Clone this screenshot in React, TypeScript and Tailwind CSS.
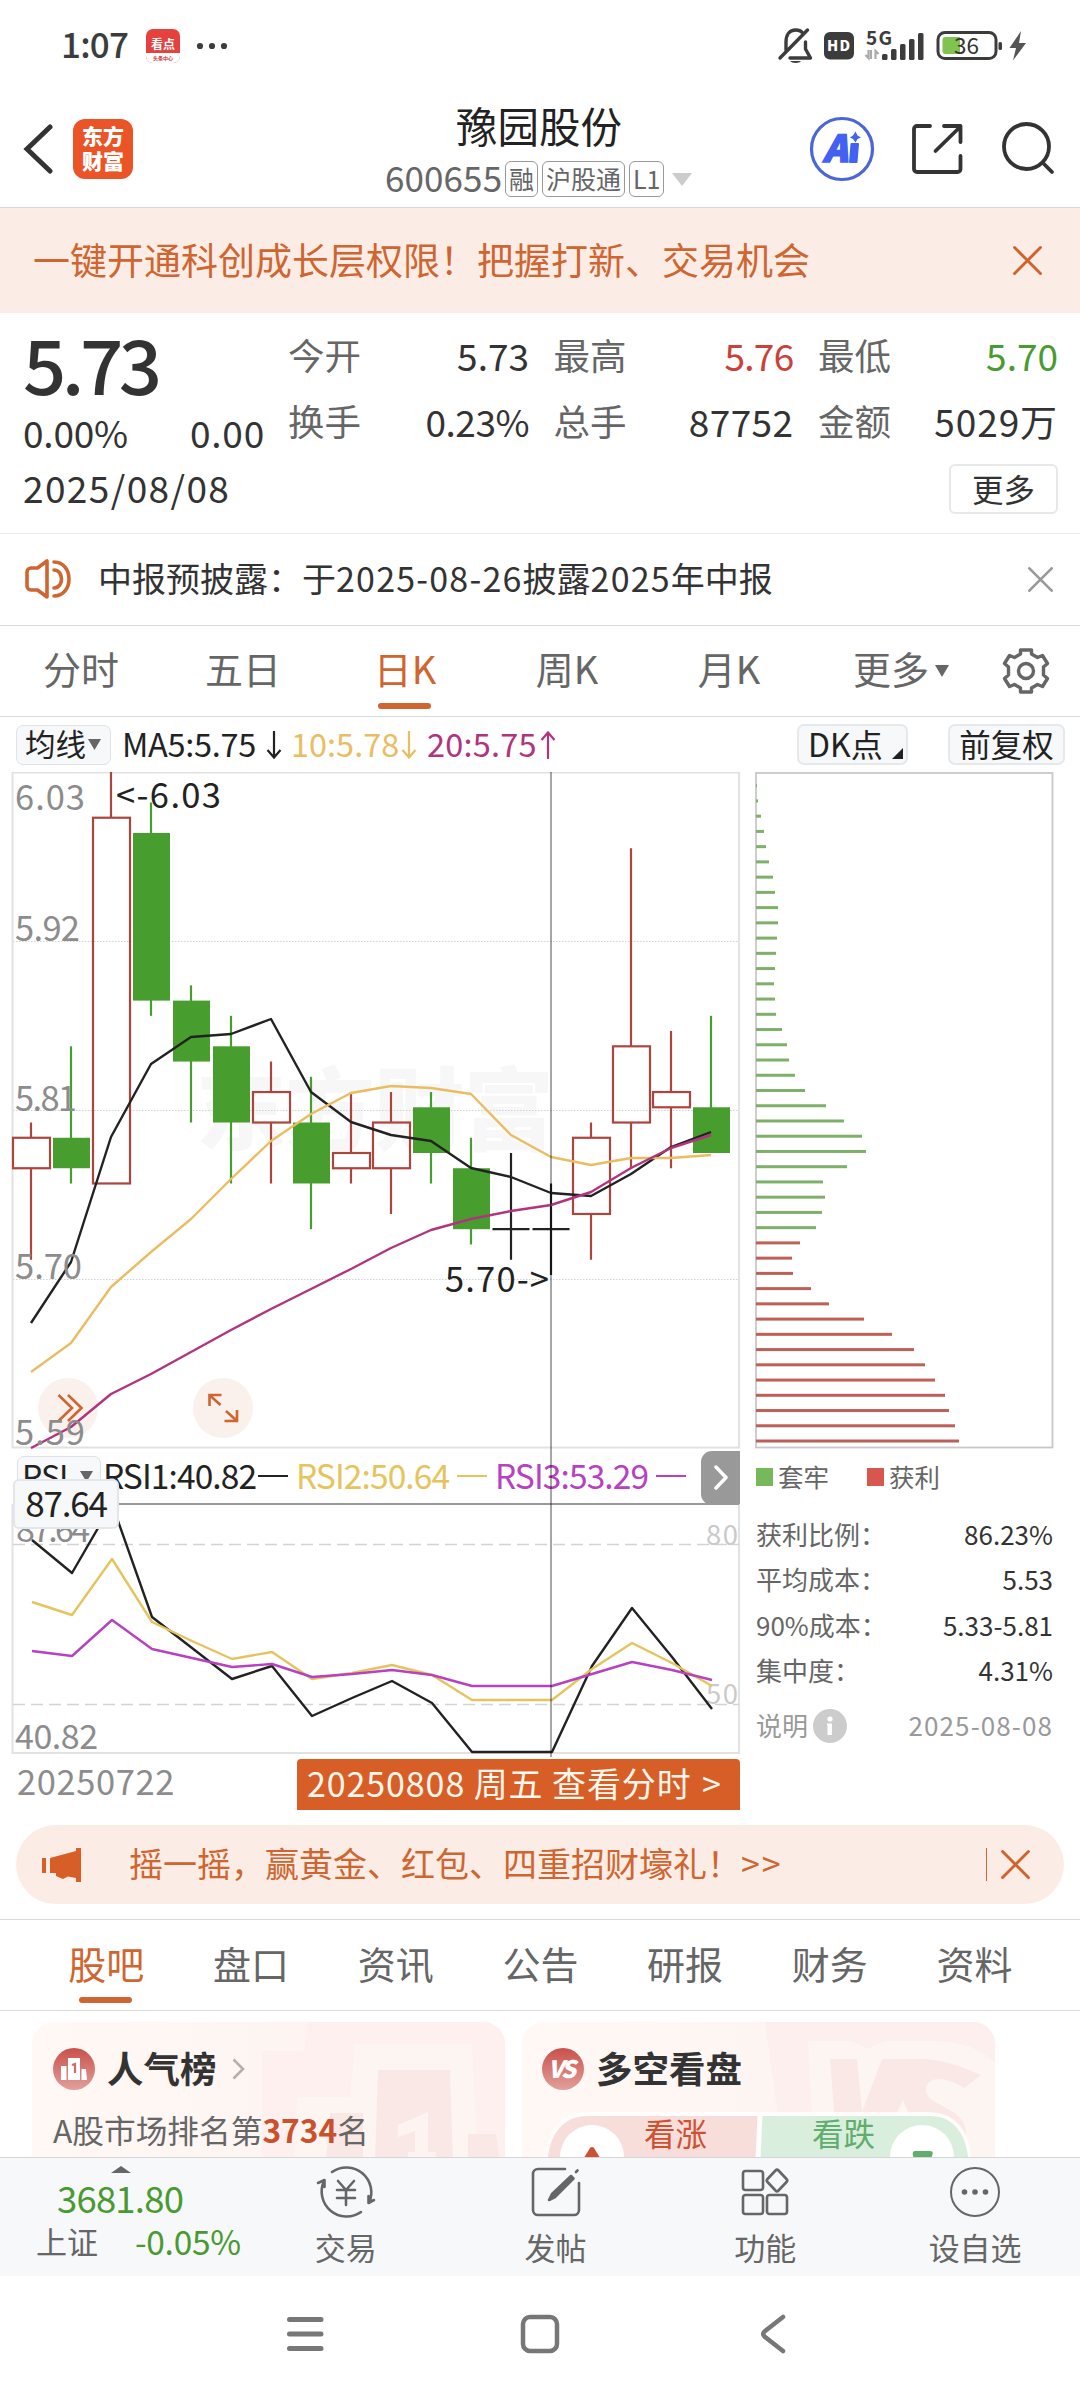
import type { ReactNode } from 'react'

type Candle = { open: number; close: number; high: number; low: number }

const candles: Candle[] = [
  { open: 5.77, close: 5.79, high: 5.8, low: 5.71 },
  { open: 5.79, close: 5.77, high: 5.85, low: 5.76 },
  { open: 5.76, close: 6.0, high: 6.03, low: 5.76 },
  { open: 5.99, close: 5.88, high: 6.01, low: 5.87 },
  { open: 5.88, close: 5.84, high: 5.89, low: 5.8 },
  { open: 5.85, close: 5.8, high: 5.87, low: 5.76 },
  { open: 5.8, close: 5.82, high: 5.84, low: 5.76 },
  { open: 5.8, close: 5.76, high: 5.83, low: 5.73 },
  { open: 5.77, close: 5.78, high: 5.82, low: 5.76 },
  { open: 5.77, close: 5.8, high: 5.82, low: 5.74 },
  { open: 5.81, close: 5.78, high: 5.82, low: 5.76 },
  { open: 5.77, close: 5.73, high: 5.79, low: 5.72 },
  { open: 5.73, close: 5.73, high: 5.78, low: 5.71 },
  { open: 5.73, close: 5.73, high: 5.76, low: 5.7 },
  { open: 5.74, close: 5.79, high: 5.8, low: 5.71 },
  { open: 5.8, close: 5.85, high: 5.98, low: 5.77 },
  { open: 5.81, close: 5.82, high: 5.86, low: 5.77 },
  { open: 5.81, close: 5.78, high: 5.87, low: 5.78 },
]

// y positions of the indicator lines, one per trading day
const ma5 = [1323, 1262, 1137, 1064, 1037, 1034, 1019, 1092, 1122, 1135, 1141, 1168, 1177, 1193, 1196, 1174, 1147, 1132]
const ma10 = [1372, 1343, 1287, 1252, 1219, 1179, 1141, 1114, 1093, 1086, 1088, 1094, 1135, 1157, 1165, 1158, 1158, 1155]
const ma20 = [1448, 1427, 1394, 1374, 1352, 1330, 1309, 1289, 1269, 1248, 1230, 1219, 1211, 1205, 1192, 1168, 1148, 1135]
const rsi1 = [1540, 1573, 1504, 1617, 1648, 1679, 1666, 1716, 1698, 1681, 1703, 1752, 1752, 1752, 1666, 1608, 1657, 1709]
const rsi2 = [1602, 1615, 1559, 1622, 1641, 1659, 1652, 1679, 1673, 1665, 1675, 1700, 1700, 1700, 1669, 1643, 1663, 1686]
const rsi3 = [1651, 1656, 1620, 1649, 1658, 1667, 1664, 1677, 1674, 1670, 1675, 1686, 1686, 1686, 1674, 1662, 1670, 1680]

const trapped = [1, 2, 5, 8, 10, 13, 17, 19, 22, 22, 21, 20, 19, 18, 19, 20, 26, 31, 33, 39, 49, 70, 88, 106, 110, 91, 67, 69, 66, 60]
const profit = [44, 36, 37, 55, 73, 108, 136, 158, 169, 179, 189, 193, 199, 203]

const dayX = (i: number) => 31 + i * 40
const priceY = (p: number) => 772 + (6.03 - p) * 1524
const toPoints = (ys: number[]) => ys.map((y, i) => `${dayX(i)},${y}`).join(' ')

const quotes = [
  { label: '今开', value: '5.73', color: 'text-[#333]' },
  { label: '最高', value: '5.76', color: 'text-[#c9413a] tracking-[-0.7px]' },
  { label: '最低', value: '5.70', color: 'text-[#4a9a32]' },
  { label: '换手', value: '0.23%', color: 'text-[#333] tracking-[-0.5px]' },
  { label: '总手', value: '87752', color: 'text-[#333] tracking-[0.4px]' },
  { label: '金额', value: '5029万', color: 'text-[#333] tracking-[0.9px]' },
]

const periods = ['分时', '五日', '日K', '周K', '月K']
const sections = ['股吧', '盘口', '资讯', '公告', '研报', '财务', '资料']

const stats = [
  { label: '获利比例：', value: '86.23%' },
  { label: '平均成本：', value: '5.53' },
  { label: '90%成本：', value: '5.33-5.81' },
  { label: '集中度：', value: '4.31%' },
]

function Cross({ size, color, width = 3 }: { size: number; color: string; width?: number }) {
  return (
    <svg width={size} height={size} viewBox="0 0 28 28" fill="none" stroke={color} strokeWidth={width} strokeLinecap="round">
      <path d="M1.5 1.5 26.5 26.5M26.5 1.5 1.5 26.5" />
    </svg>
  )
}

function StatusBar() {
  return (
    <div className="flex h-[92px] items-center pl-[61px] text-[#3c3c3c]">
      <span className="w-[85px] text-[35px] leading-[40px] font-medium tracking-[-0.8px] -mt-[6px]">1:07</span>
      <div className="flex h-[34px] w-[34px] flex-col items-center rounded-[7px] bg-[#e5423f]">
        <span className="mt-[6px] text-[12px] leading-[18px] font-bold text-white">看点</span>
        <span className="h-[10px] w-full rounded-b-[7px] bg-white text-center text-[5px] leading-[9px] font-bold text-[#c33]">头条中心</span>
      </div>
      <svg className="ml-[16px]" width="32" height="8" fill="#3c3c3c">
        <circle cx="4" cy="4" r="3.1" />
        <circle cx="16" cy="4" r="3.1" />
        <circle cx="28" cy="4" r="3.1" />
      </svg>
      <svg className="ml-auto mr-[52px]" width="252" height="44" viewBox="776 24 252 44">
        {/* muted bell */}
        <g fill="none" stroke="#3c3c3c" strokeWidth="3.4" strokeLinecap="round" strokeLinejoin="round">
          <path d="M786 50V42C786 34 790 30 795.500 30C799 30 801.500 31 803 33.500M805.500 42V49L810.500 58H790" />
          <path d="M780 58 807.500 30" />
        </g>
        <path d="M790 61h11c-1.500 2.500-9 2.500-11 0z" fill="#3c3c3c" />
        <rect x="824" y="32" width="30" height="27.500" rx="6" fill="#3c3c3c" />
        <text x="827" y="51" fontSize="14.500" fontWeight="900" fill="#fff" textLength="23">HD</text>
        <text x="866" y="44.500" fontSize="19" fontWeight="700" fill="#3c3c3c" textLength="26">5G</text>
        <path d="M868.500 50v8l-3-3M875.500 59v-8l3 3M871 50v9" stroke="#aaa" strokeWidth="2.200" fill="none" />
        <g fill="#3c3c3c">
          <rect x="882" y="54" width="5.500" height="6" rx="1.500" />
          <rect x="891" y="49" width="5.500" height="11" rx="1.500" />
          <rect x="900" y="44" width="5.500" height="16" rx="1.500" />
          <rect x="909" y="39" width="5.500" height="21" rx="1.500" />
          <rect x="918" y="33" width="5.500" height="27" rx="1.500" />
        </g>
        <rect x="938" y="32.500" width="58" height="26" rx="7" fill="none" stroke="#3c3c3c" strokeWidth="3" />
        <path d="M942.500 40a3 3 0 0 1 3-3H960v17h-14.500a3 3 0 0 1-3-3z" fill="#80c34f" />
        <text x="954" y="54" fontSize="22.500" fill="#333" textLength="25">36</text>
        <rect x="998.500" y="42" width="3.500" height="8" rx="1.500" fill="#3c3c3c" />
        <path d="M1021 31 1009.500 48H1016L1013 60.500 1026 43H1019z" fill="#555" />
      </svg>
    </div>
  )
}

function Tag({ children }: { children: ReactNode }) {
  return (
    <span className="flex h-[36px] shrink-0 items-center rounded-[6px] border border-[#999] px-[3px] text-[25px] leading-[34px] whitespace-nowrap text-[#666]">
      <span className="-mt-[2px]">{children}</span>
    </span>
  )
}

function Header() {
  return (
    <header className="flex h-[116px] items-start border-b border-[#d6d8da]">
      <svg className="mt-[32px] ml-[22px]" width="32" height="50" fill="none" stroke="#333" strokeWidth="5">
        <path d="M28 3 5 25 28 47" strokeLinecap="round" />
      </svg>
      <div className="mt-[27px] ml-[19px] flex h-[60px] w-[60px] flex-col items-center justify-center rounded-[12px] bg-[#ea5426] pb-[3px] text-[21px] leading-[25px] font-black text-white">
        <span>东方</span>
        <span>财富</span>
      </div>
      <div className="ml-[252px] flex w-[308px] shrink-0 flex-col items-center">
        <h1 className="mt-[12px] text-[41.5px] leading-[42px] text-[#222]">豫园股份</h1>
        <div className="mt-[15px] flex w-full items-center gap-[4px]">
          <span className="-mt-[4px] w-[116px] shrink-0 text-[35px] leading-[36px] tracking-[0.1px] text-[#666]">600655</span>
          <Tag>融</Tag>
          <Tag>沪股通</Tag>
          <Tag>L1</Tag>
          <svg className="ml-[4px] shrink-0" width="20" height="13">
            <path d="M0 0H20L10 13z" fill="#ccc" />
          </svg>
        </div>
      </div>
      <svg className="mt-[18px] ml-[113px] shrink-0" width="250" height="80" viewBox="806 110 250 80" fill="none">
        <circle cx="842" cy="149" r="30.500" stroke="#4a66d8" strokeWidth="3.200" />
        <text x="823" y="162" fontSize="37" fontWeight="900" fontStyle="italic" fill="#4361f2" stroke="#4361f2" strokeWidth="1.500">A</text>
        <path d="M851.500 144h6.500l-1.500 18h-6.500z" fill="#4361f2" stroke="#4361f2" strokeWidth="2" strokeLinejoin="round" />
        <path d="M855.500 131.500 857.500 135.500 861 137.500 857.500 139 855.500 142.500 853 139 850 137.500 853 135.500z" fill="#4361f2" />
        <g stroke="#333" strokeWidth="3.800" strokeLinecap="round" strokeLinejoin="round">
          <path d="M930 126H917a3 3 0 0 0-3 3V169a3 3 0 0 0 3 3H957.500a3 3 0 0 0 3-3V156" />
          <path d="M944 126H960.500V142M960 127 935.500 151" />
          <circle cx="1026.500" cy="146.500" r="22.500" />
          <path d="M1043 163 1052 172" />
        </g>
      </svg>
    </header>
  )
}

function Quote() {
  return (
    <section className="flex h-[221px] border-b border-[#ececec] text-[#333]">
      <div className="w-[288px] shrink-0 pl-[23px]">
        <div className="mt-[11px] text-[76px] leading-[76px] font-medium tracking-[-4.5px]">5.73</div>
        <div className="mt-[12px] flex w-[242px] justify-between text-[37px] leading-[40px]">
          <span className="tracking-[-0.2px]">0.00%</span>
          <span className="tracking-[0.8px]">0.00</span>
        </div>
        <div className="mt-[15px] text-[37px] leading-[40px] tracking-[1.4px]">2025/08/08</div>
      </div>
      <div className="flex flex-1 flex-col items-end pr-[22px]">
        <div className="mt-[22px] grid w-full grid-cols-[241px_240px_240px] gap-x-[24.500px] gap-y-[26px]">
          {quotes.map((q) => (
            <div key={q.label} className="flex justify-between text-[37px] leading-[40px]">
              <span className="text-[36.500px] text-[#666]">{q.label}</span>
              <span className={q.color}>{q.value}</span>
            </div>
          ))}
        </div>
        <button className="mt-[23px] h-[50px] w-[109px] rounded-[6px] border-2 border-[#e8e8e8] text-[31.500px] leading-[40px] text-[#333]">
          <span className="block -mt-[3px]">更多</span>
        </button>
      </div>
    </section>
  )
}

function Notice() {
  return (
    <section className="flex h-[92px] items-center border-b border-[#d9d9d9] pl-[25px] text-[#333]">
      <svg className="-mt-[2px]" width="46" height="40" fill="none" stroke="#cf6530" strokeWidth="3.600" strokeLinecap="round" strokeLinejoin="round">
        <path d="M22 2V38L12.500 31H6a4 4 0 0 1-4-4V13a4 4 0 0 1 4-4H12.500z" />
        <path d="M29 11C39 11 39 29 29 29M29 3C49 3 49 37 29 37" />
      </svg>
      <span className="ml-[27px] -mt-[3px] text-[34px] leading-[40px]">
        中报预披露：于<span className="tracking-[1.2px]">2025-08-26</span>披露<span className="tracking-[1.2px]">2025</span>年中报
      </span>
      <span className="ml-auto mr-[27px]">
        <Cross size={25} color="#999" />
      </span>
    </section>
  )
}

function PeriodTabs() {
  return (
    <nav className="flex h-[91px] border-b border-[#d9d9d9] text-[38px] leading-[40px] text-[#666]">
      {periods.map((p) => (
        <div key={p} className={`relative w-[162px] pt-[22px] text-center ${p === '日K' ? 'text-[#cf6530]' : ''}`}>
          {p}
          {p === '日K' && <div className="absolute top-[77px] left-[54px] h-[6px] w-[53px] rounded-full bg-[#cf6530]" />}
        </div>
      ))}
      <div className="flex w-[165px] justify-end gap-[6px] pt-[22px] pr-[26px]">
        更多
        <svg className="mt-[17px]" width="14" height="12">
          <path d="M0 0H14L7 12z" fill="#666" />
        </svg>
      </div>
      <svg className="mt-[20px] ml-[26px]" width="50" height="50" viewBox="-25 -25 50 50" fill="none" stroke="#666" strokeWidth="3.400" strokeLinejoin="round">
        <path d="M-5.500-21H5.500V-17L11.500-13.500 16.500-15.500 21.500-7.500 17.500-4V4L21.500 7.500 16.500 15.500 11.500 13.500 5.500 17V21H-5.500V17L-11.500 13.500-16.500 15.500-21.500 7.500-17.500 4V-4L-21.500-7.500-16.500-15.500-11.500-13.500-5.500-17z" />
        <circle r="7.500" />
      </svg>
    </nav>
  )
}

function Arrow({ color, up }: { color: string; up?: boolean }) {
  return (
    <svg width="16" height="30" fill="none" stroke={color} strokeWidth="2.200" className={up ? 'shrink-0 rotate-180' : 'shrink-0'}>
      <path d="M8 1V27M1.500 20 8 27.500 14.500 20" />
    </svg>
  )
}

function ChartToolbar() {
  return (
    <div className="flex h-[55px] items-center pl-[16px] text-[#222]">
      <div className="flex h-[40px] w-[95px] items-center rounded-[7px] border border-[#dfe2e6] bg-[#f6f8fa] pl-[8px] text-[30.500px] leading-[36px]">
        <span className="-mt-[3px]">均线</span>
        <svg className="ml-[2px]" width="13" height="11">
          <path d="M0 0H13L6.500 11z" fill="#666" />
        </svg>
      </div>
      <span className="ml-[11px] -mt-[3px] w-[144px] shrink-0 text-[32.500px] leading-[36px] tracking-[-0.3px]">MA5:5.75</span>
      <Arrow color="#222" />
      <span className="ml-[9px] -mt-[3px] w-[110px] shrink-0 text-[32.500px] leading-[36px] text-[#e9bd62]">10:5.78</span>
      <Arrow color="#e9bd62" />
      <span className="ml-[10px] -mt-[3px] w-[113px] shrink-0 text-[32.500px] leading-[36px] tracking-[0.2px] text-[#b0347e]">20:5.75</span>
      <Arrow color="#b0347e" up />
      <div className="ml-auto mr-[40px] flex h-[41px] w-[111px] shrink-0 items-center rounded-[7px] border-2 border-[#e6e9ec] bg-[#f6f8fa] pl-[9px] text-[32px] leading-[36px]">
        <span className="-mt-[3px]">DK点</span>
        <svg className="mt-[18px] ml-auto mr-[3px] shrink-0" width="11" height="11">
          <path d="M11 0V11H0z" fill="#222" />
        </svg>
      </div>
      <div className="mr-[15px] flex h-[41px] w-[117px] shrink-0 items-center justify-center rounded-[7px] border-2 border-[#e6e9ec] bg-[#f6f8fa] text-[31.500px] leading-[36px]">
        <span className="-mt-[3px]">前复权</span>
      </div>
    </div>
  )
}

function CandleShape({ c, x }: { c: Candle; x: number }) {
  const top = priceY(Math.max(c.open, c.close))
  const bottom = priceY(Math.min(c.open, c.close))
  const high = priceY(c.high)
  const low = priceY(c.low)
  if (c.open === c.close) {
    return <path d={`M${x} ${high}V${low}M${x - 18.5} ${top}h37`} stroke="#222" strokeWidth="2.2" />
  }
  if (c.close > c.open) {
    return (
      <g stroke="#ad453f" strokeWidth="2.200" fill="none">
        <path d={`M${x} ${high}V${top}M${x} ${bottom}V${low}`} />
        <rect x={x - 18} y={top} width="37" height={bottom - top} />
      </g>
    )
  }
  return (
    <g fill="#479e2e">
      <rect x={x - 1.1} y={high} width="2.200" height={low - high} />
      <rect x={x - 18} y={top} width="37" height={bottom - top} />
    </g>
  )
}

function KLine() {
  return (
    <svg className="block" width="742" height="677" viewBox="0 772 742 677">
      <text x="196" y="1143" fontSize="90" fontWeight="900" fill="#f7f7f7" textLength="358">东方财富</text>
      <g stroke="#d2d2d2" strokeWidth="1" strokeDasharray="1.500 1.500">
        <path d="M13 941.500H739M13 1110.500H739M13 1279.500H739" />
      </g>
      <rect x="12.500" y="772.500" width="726.500" height="675" fill="none" stroke="#e2e2e2" strokeWidth="2" />
      {candles.map((c, i) => (
        <CandleShape key={i} c={c} x={dayX(i)} />
      ))}
      <g fill="none" strokeWidth="2.400" strokeLinejoin="round">
        <polyline points={toPoints(ma5)} stroke="#222" />
        <polyline points={toPoints(ma10)} stroke="#e9bd62" />
      </g>
      <g fill="#faf0ea" fillOpacity=".9">
        <circle cx="68" cy="1408" r="30" />
        <circle cx="223" cy="1408" r="30" />
      </g>
      <polyline points={toPoints(ma20)} fill="none" stroke="#b0347e" strokeWidth="2.400" strokeLinejoin="round" />
      <g fill="none" stroke="#cf6530" strokeWidth="2.600">
        <path d="M58.500 1395 72 1408 58.500 1421M68 1395 81.500 1408 68 1421" />
        <path d="M209.500 1406V1395H221.500M210 1395.500 220.500 1405M237 1410V1421H224.500M236.500 1420.500 226 1411" />
      </g>
      <g fontSize="34.500" fill="#8c8c8c">
        <text x="15" y="810" textLength="70">6.03</text>
        <text x="15" y="940.500" textLength="65">5.92</text>
        <text x="15" y="1110.500" textLength="62">5.81</text>
        <text x="15" y="1279" textLength="67">5.70</text>
        <text x="15" y="1444.500" textLength="70">5.59</text>
      </g>
      <g fontSize="34.500" fill="#222">
        <text x="116" y="808" textLength="105">&lt;-6.03</text>
        <text x="445" y="1292" textLength="104">5.70-&gt;</text>
      </g>
    </svg>
  )
}

function RsiHeader() {
  return (
    <div className="flex h-[54px] items-center pl-[17px] text-[33.500px] leading-[40px] tracking-[-0.9px]">
      <div className="flex h-[40px] w-[84px] shrink-0 items-center rounded-[7px] border border-[#dfe2e6] bg-[#f6f8fa] pl-[4px] text-[32px] leading-[36px] text-[#222]">
        <span className="-mt-[2px]">RSI</span>
        <svg className="ml-auto mr-[7px]" width="13" height="11">
          <path d="M0 0H13L6.500 11z" fill="#666" />
        </svg>
      </div>
      <span className="-mt-[3px] ml-[2px] w-[155px] shrink-0 text-[#222]">RSI1:40.82</span>
      <i className="h-[2px] w-[30px] shrink-0 bg-[#222]" />
      <span className="-mt-[3px] ml-[8px] w-[161px] shrink-0 text-[#e5c45e]">RSI2:50.64</span>
      <i className="h-[2px] w-[30px] shrink-0 bg-[#e5c45e]" />
      <span className="-mt-[3px] ml-[8px] w-[161px] shrink-0 text-[#b741c0]">RSI3:53.29</span>
      <i className="h-[2px] w-[30px] shrink-0 bg-[#b741c0]" />
      <div className="ml-auto mt-[3px] flex h-[54px] w-[39px] shrink-0 items-center justify-center rounded-l-[11px] bg-[#999]">
        <svg width="14" height="25" fill="none" stroke="#fff" strokeWidth="3.500" strokeLinecap="round" strokeLinejoin="round">
          <path d="M2 2 12 12.500 2 23" />
        </svg>
      </div>
    </div>
  )
}

function RsiChart() {
  return (
    <svg className="block" width="742" height="253" viewBox="0 1503 742 253">
      <path d="M12.500 1504V1753H739V1504" fill="none" stroke="#e2e2e2" strokeWidth="2" />
      <path d="M13 1544.500H739M13 1704.500H739" stroke="#d4d4d4" strokeWidth="1.500" strokeDasharray="12 6" />
      <g fontSize="34" fill="#8c8c8c">
        <text x="16" y="1541.500" textLength="74">87.64</text>
        <text x="15" y="1748.500" textLength="83">40.82</text>
      </g>
      <g fontSize="27.500" fill="#cacaca">
        <text x="706" y="1544.500" textLength="32">80</text>
        <text x="706" y="1704" textLength="32">50</text>
      </g>
      <g fill="none" strokeWidth="2.400" strokeLinejoin="round" transform="translate(1 0)">
        <polyline points={toPoints(rsi1)} stroke="#222" />
        <polyline points={toPoints(rsi2)} stroke="#e5c45e" />
        <polyline points={toPoints(rsi3)} stroke="#b741c0" />
      </g>
      <path d="M13 1504H739" stroke="#999" strokeWidth="2" />
    </svg>
  )
}

function ChipPanel() {
  return (
    <div className="ml-[15px] w-[299px] shrink-0">
      <svg className="block" width="299" height="677" viewBox="755 772 299 677">
        <rect x="756" y="773" width="296.500" height="674.500" fill="none" stroke="#c8c8c8" strokeWidth="1.800" />
        {[...trapped, ...profit].map((w, i) => (
          <rect key={i} x="756" y={784.2 + i * 15.24} width={w} height="3" fill={i < trapped.length ? '#7fb069' : '#bd6058'} />
        ))}
      </svg>
      <div className="flex h-[56px] items-center text-[25.500px] leading-[30px] text-[#666]">
        <i className="ml-[1px] h-[18px] w-[17px] bg-[#75b95a]" />
        <span className="-mt-[3px] ml-[5px]">套牢</span>
        <i className="ml-[38px] h-[18px] w-[17px] bg-[#d9564f]" />
        <span className="-mt-[3px] ml-[5px]">获利</span>
      </div>
      <div className="mt-[6px] pr-[1px] pl-[1px]">
        {stats.map((s) => (
          <div key={s.label} className="flex h-[45.500px] items-center justify-between text-[26px] leading-[30px] text-[#333]">
            <span className="text-[#666]">{s.label}</span>
            <span>{s.value}</span>
          </div>
        ))}
        <div className="mt-[10px] flex h-[44px] items-center text-[26px] leading-[30px] text-[#999]">
          <span>说明</span>
          <svg className="mt-[2px] ml-[5px]" width="34" height="34">
            <circle cx="17" cy="17" r="17" fill="#ccc" />
            <circle cx="17" cy="10" r="2.600" fill="#fff" />
            <path d="M14 14.500h5V26h-4.500V16.500H14z" fill="#fff" />
          </svg>
          <span className="ml-auto tracking-[1.1px]">2025-08-08</span>
        </div>
      </div>
    </div>
  )
}

function Charts() {
  return (
    <section className="flex h-[1053px] items-start">
      <div className="relative w-[740px] shrink-0">
        <KLine />
        <RsiHeader />
        <RsiChart />
        <div className="flex h-[55px] items-start justify-between text-[34.500px] leading-[40px]">
          <span className="mt-[4px] pl-[17px] tracking-[0.6px] text-[#8c8c8c]">20250722</span>
          <div className="mt-[3px] h-[51px] w-[443px] rounded-t-[4px] bg-[#d85e28] pl-[10px] text-[34px] leading-[48px] tracking-[0.9px] whitespace-nowrap text-[#fff7ec]">
            20250808 周五 查看分时 <span className="ml-[2px]">&gt;</span>
          </div>
        </div>
        {/* crosshair and its value box */}
        <div className="absolute top-0 left-[550px] h-[985px] w-[2px] bg-black/35" />
        <div className="absolute top-[707px] left-[13px] h-[50px] w-[106px] rounded-[6px] border-2 border-[#e3e6ea] bg-[#f6f8fa] text-center text-[35px] leading-[42px] tracking-[-1.2px] text-[#222]">
          87.64
        </div>
      </div>
      <ChipPanel />
    </section>
  )
}

function Promo() {
  return (
    <div className="mx-[16px] flex h-[79px] items-center rounded-full bg-[#fbede5] pl-[26px] text-[#cf6530]">
      <svg width="40" height="36" fill="#d85e28">
        <path d="M0 11h4v15H0zM8 11 34 4V1h5V35h-5V31L26 29.500 21 32 14 29V26H8z" />
      </svg>
      <span className="-mt-[3px] ml-[47px] text-[34px] leading-[40px]">
        摇一摇，赢黄金、红包、四重招财壕礼！
        <span className="tracking-[2px]">&gt;&gt;</span>
      </span>
      <i className="mr-[14px] ml-auto h-[33px] w-px bg-[#cf6530]" />
      <span className="mr-[34px]">
        <Cross size={29} color="#d2622c" width={2.800} />
      </span>
    </div>
  )
}

function SectionTabs() {
  return (
    <nav className="mt-[15px] flex h-[92px] border-y border-[#d9d9d9] pl-[34px] text-[38px] leading-[40px] text-[#666]">
      {sections.map((s, i) => (
        <div key={s} className={`relative w-[144.700px] pt-[23px] text-center ${i === 0 ? 'text-[#cf6530]' : ''}`}>
          {s}
          {i === 0 && <div className="absolute top-[77px] left-[45px] h-[6px] w-[53px] rounded-full bg-[#cf6530]" />}
        </div>
      ))}
    </nav>
  )
}

function Cards() {
  return (
    <section className="flex h-[146px] gap-[17px] overflow-hidden pt-[11px] pl-[32px]">
      <div className="relative h-[160px] w-[473px] overflow-hidden rounded-[22px] bg-gradient-to-r from-[#fff8f5] to-[#fdf3f1] pl-[21px]">
        <svg className="absolute top-0 left-0" width="473" height="140">
          <path d="M276 0H473V140H230V29H272z" fill="#fcefed" fillOpacity=".8" />
          <path d="M323 22H440L446 140H262L265 75H318z" fill="#fdf5f2" />
          <path d="M346 48H418L421 140H343zM298 91H331V140H294zM436 112H464L468 140H436z" fill="#f9e8e6" />
          <path d="M366 103 396 90V130H404V138H376V130H383V109L366 115z" fill="#fdf4f1" />
        </svg>
        <div className="relative flex h-[94px] items-center">
          <svg width="42" height="42">
            <defs>
              <linearGradient id="badge" x1="0" y1="0" x2="0" y2="1">
                <stop stopColor="#c9504b" />
                <stop offset="1" stopColor="#e2a09b" />
              </linearGradient>
            </defs>
            <circle cx="21" cy="21" r="21" fill="url(#badge)" />
            <path d="M15 10H27V32H15zM8 18H13.500V32H8zM28.500 21H33L34 32H28.500z" fill="#fff" />
            <path d="M19 17 22 16V25" stroke="#cf6a64" strokeWidth="2.200" fill="none" />
          </svg>
          <span className="-mt-[3px] ml-[12px] text-[36.500px] leading-[40px] font-bold text-[#333]">人气榜</span>
          <svg className="ml-[15px]" width="13" height="22" fill="none" stroke="#b5b0ae" strokeWidth="2.600">
            <path d="M1.500 1.500 11 11 1.500 20.500" />
          </svg>
        </div>
        <p className="relative -mt-[5px] text-[31.700px] leading-[36px] text-[#666]">
          A股市场排名第<b className="font-bold text-[#c9522c]">3734</b>名
        </p>
      </div>
      <div className="relative h-[160px] w-[473px] overflow-hidden rounded-[22px] bg-gradient-to-r from-[#fff8f5] to-[#fdf3f1] pl-[20px]">
        <svg className="absolute top-0 left-0" width="473" height="140">
          <path d="M243 0H473V140H262z" fill="#fcefed" />
          <path d="M286 19H330L345 27 362 19H400C440 17 465 30 473 42V140H292z" fill="#fdf5f2" />
          <path d="M308 37H335L340 90 360 37H398C412 37 430 40 459 53L442 66C420 52 404 56 404 68C404 84 440 84 444 108V140H316z" fill="#f9e8e6" />
          <path d="M381 78 369 103H392z" fill="#fdf5f2" />
        </svg>
        <div className="relative flex h-[94px] items-center">
          <svg width="42" height="42">
            <circle cx="21" cy="21" r="21" fill="url(#badge)" />
            <text x="6" y="30" fontSize="24" fontWeight="900" fontStyle="italic" fill="#fff" textLength="28">VS</text>
          </svg>
          <span className="-mt-[3px] ml-[12px] text-[36.500px] leading-[40px] font-bold text-[#333]">多空看盘</span>
        </div>
        <svg className="relative -mt-[5px] block" width="436" height="60">
          <path d="M2 60C2 20 18 1 46 1H385C415 1 430 20 430 60z" fill="#fff" fillOpacity=".8" />
          <path d="M5 60C5 24 20 5 46 5H215.500L213 60z" fill="#f7dedb" />
          <path d="M220.500 5H388C412 5 427 24 427 60H218z" fill="#daeedd" />
          <circle cx="50" cy="46" r="32" fill="#fff" />
          <circle cx="380" cy="46" r="32" fill="#fff" />
          <path d="M40 50 48 37q2-2 4 0L60 50z" fill="#cf5030" />
          <path d="M373 40H388q4 0 2 5L384 60H377L371 45q-1-5 2-5z" fill="#5fae6d" />
          <text x="102" y="35" fontSize="31.500" fill="#cf5030">看涨</text>
          <text x="270" y="35" fontSize="31.500" fill="#5fae6d">看跌</text>
        </svg>
      </div>
    </section>
  )
}

function Action({ label, children }: { label: string; children: ReactNode }) {
  return (
    <div className="flex w-[210px] flex-col items-center pt-[7px]">
      <svg width="60" height="54" viewBox="-30 -27 60 54" fill="none" stroke="#666" strokeWidth="2.600" strokeLinecap="round" strokeLinejoin="round">
        {children}
      </svg>
      <span className="mt-[10px] text-[31px] leading-[36px] text-[#666]">{label}</span>
    </div>
  )
}

function BottomBar() {
  return (
    <footer className="flex h-[119px] border-t border-[#d5d5d9] bg-[#f7f8fa]">
      <div className="w-[241px] text-[#4a9a32]">
        <svg className="mt-[8px] ml-[111px] block" width="20" height="7">
          <path d="M0 7 10 0 20 7z" fill="#666" />
        </svg>
        <div className="mt-[5px] ml-[57px] text-[36.500px] leading-[40px] tracking-[-0.8px]">3681.80</div>
        <div className="mt-[5px] flex justify-between pl-[36px] text-[33.500px] leading-[36px] tracking-[-0.3px]">
          <span className="text-[31px] tracking-normal text-[#666]">上证</span>
          <span>-0.05%</span>
        </div>
      </div>
      <Action label="交易">
        <path d="M-14-20A25 25 0 0 1 23 11M22.500 11 28 8M22.500 11V4" />
        <path d="M15 20A25 25 0 0 1-22-11M-21.500-12-28-9M-21.500-12V-5" />
        <path d="M-8-11 0-2 8-11M0-2V13M-9-2H9M-9 6H9" />
      </Action>
      <Action label="发帖">
        <path d="M9-23H-18a5 5 0 0 0-5 5V18a5 5 0 0 0 5 5H18a5 5 0 0 0 5-5V-9" />
        <path d="M-7 8-4 2 15-16 17.500-13.500-1 5zM20-20 21.500-21.500" strokeWidth="2.600" fill="#666" />
      </Action>
      <Action label="功能">
        <rect x="-22" y="-21" width="20" height="19" rx="2.500" />
        <rect x="-22" y="3" width="20" height="19" rx="2.500" />
        <rect x="2" y="3" width="20" height="19" rx="2.500" />
        <path d="M10.500-21.500 q1.500-1.500 3 0L21.500-13q1.500 1.500 0 3L13.500-1.500q-1.500 1.500-3 0L2.500-10q-1.500-1.500 0-3z" />
      </Action>
      <Action label="设自选">
        <circle r="24" strokeWidth="2" />
        <g fill="#666" stroke="none">
          <circle cx="-10.500" r="2.800" />
          <circle r="2.800" />
          <circle cx="10.500" r="2.800" />
        </g>
      </Action>
    </footer>
  )
}

function SystemNav() {
  return (
    <div className="flex h-[124px] items-center pb-[9px] pl-[286px]">
      <svg width="38" height="40" stroke="#777" strokeWidth="5" strokeLinecap="round">
        <path d="M3.500 5.500H35M3.500 20H35M3.500 34.500H35" />
      </svg>
      <svg className="ml-[196px]" width="40" height="40" fill="none" stroke="#777" strokeWidth="4.500">
        <rect x="3" y="3" width="34" height="34" rx="7" />
      </svg>
      <svg className="ml-[200px]" width="26" height="40" fill="none" stroke="#777" strokeWidth="4.500" strokeLinecap="round">
        <path d="M23 3 4.500 17.500Q2 20 4.500 22.500L23 37" />
      </svg>
    </div>
  )
}

export default function App() {
  return (
    <main className="h-[2400px] w-[1080px] overflow-hidden bg-white font-['Noto_Sans_CJK_SC',sans-serif]">
      <StatusBar />
      <Header />
      <div className="flex h-[105px] items-center bg-[#fbede5] pl-[33px] text-[#cf6530]">
        <span className="-mt-[3px] text-[37px] leading-[40px]">一键开通科创成长层权限！把握打新、交易机会</span>
        <span className="ml-auto mr-[38px]">
          <Cross size={29} color="#d2622c" width={2.800} />
        </span>
      </div>
      <Quote />
      <Notice />
      <PeriodTabs />
      <ChartToolbar />
      <Charts />
      <Promo />
      <SectionTabs />
      <Cards />
      <BottomBar />
      <SystemNav />
    </main>
  )
}
